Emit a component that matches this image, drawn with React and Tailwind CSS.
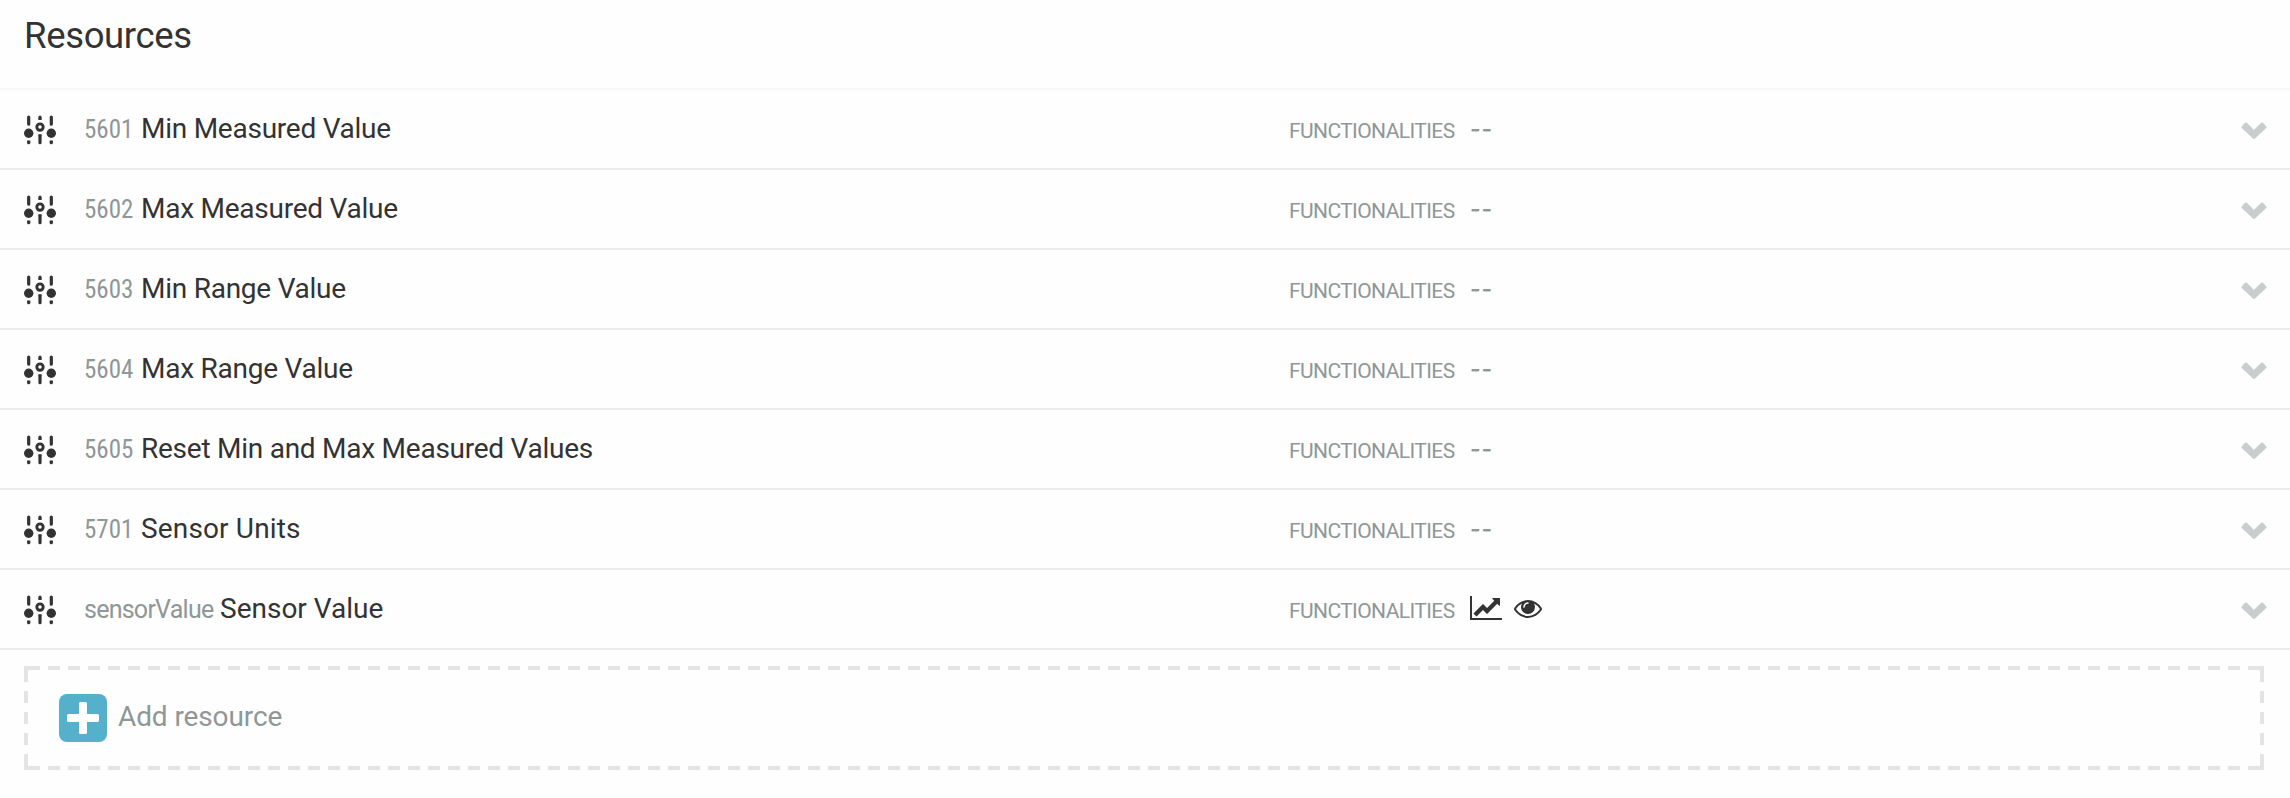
import React from 'react';

const RESOURCES = [
  { id: '5601', name: 'Min Measured Value' },
  { id: '5602', name: 'Max Measured Value' },
  { id: '5603', name: 'Min Range Value' },
  { id: '5604', name: 'Max Range Value' },
  { id: '5605', name: 'Reset Min and Max Measured Values' },
  { id: '5701', name: 'Sensor Units', nameTracking: 'tracking-[0.15px]' },
  {
    id: 'sensorValue',
    name: 'Sensor Value',
    idClass: 'w-[136px] font-[Roboto,sans-serif] tracking-[-0.75px]',
    nameTracking: 'tracking-normal',
    active: true,
  },
];

function SlidersIcon() {
  return (
    <svg className="mt-px h-[30px] w-8 shrink-0" viewBox="0 0 32 30" fill="none" stroke="#333333">
      <g strokeWidth="3.2" strokeLinecap="round">
        <path d="M4.7 2.1V9.2M4.7 27.3V27.7M16 2.1V3M16 21.2V27.7M27.3 2.1V9.2M27.3 27.3V27.7" />
      </g>
      <path d="M3.1 25.5h3.2v2H3.1zM25.7 25.5h3.2v2h-3.2zM14.4 19.3h3.2v2h-3.2zM14.4 3h3.2v2h-3.2z" fill="#333333" stroke="none" />
      <circle cx="4.7" cy="18.2" r="4.7" fill="#333333" stroke="none" />
      <circle cx="27.3" cy="18.2" r="4.7" fill="#333333" stroke="none" />
      <circle cx="16" cy="12.1" r="3.2" strokeWidth="2.9" />
    </svg>
  );
}

function ChevronIcon() {
  return (
    <svg className="h-[18px] w-[26px] shrink-0" viewBox="0 0 26 18" fill="#c9cdcd">
      <path d="M.7 4.4 4.1.8Q5 0 5.9.8L13 8.1 20.1.8Q21 0 21.900.8L25.300 4.400Q26 5.200 25.300 6L13.700 16.800Q13 17.400 12.300 16.800L.7 6Q0 5.200.7 4.400Z" />
    </svg>
  );
}

function ChartIcon() {
  return (
    <svg className="h-6 w-8 shrink-0" viewBox="0 128 2048 1536" fill="#333333">
      <path d="M2048 1536v128h-2048v-1536h128v1408h1920zM1920 288v435q0 21-19.500 29.500t-35.500-7.500l-121-121-633 633q-10 10-23 10t-23-10l-233-233-416 416-192-192 585-585q10-10 23-10t23 10l233 233 464-464-121-121q-16-16-7.500-35.500t29.500-19.500h435q14 0 23 9t9 23z" />
    </svg>
  );
}

function EyeIcon() {
  return (
    <svg className="mt-0.5 h-[18px] w-7 shrink-0" viewBox="0 384 1792 1152" fill="#333333">
      <path d="M1664 960q-152-236-381-353 61 104 61 225 0 185-131.500 316.500t-316.500 131.500-316.500-131.500-131.500-316.500q0-121 61-225-229 117-381 353 133 205 333.500 326.500t434.500 121.500 434.500-121.500 333.500-326.500zM944 576q0-20-14-34t-34-14q-125 0-214.500 89.500t-89.500 214.500q0 20 14 34t34 14 34-14 14-34q0-86 61-147t147-61q20 0 34-14t14-34zM1792 960q0 34-20 69-140 230-376.500 368.500t-499.500 138.500-499.500-139-376.500-368q-20-35-20-69t20-69q140-229 376.500-368t499.500-139 499.500 139 376.500 368q20 35 20 69z" />
    </svg>
  );
}

function ResourceRow({ id, name, active, idClass = 'w-[57px]', nameTracking = 'tracking-[-0.25px]' }) {
  return (
    <li className="flex h-20 items-center border-b-2 border-[#ebebeb] pr-[23px] pl-6">
      <SlidersIcon />
      <div className="ml-7 flex w-[1205px] items-baseline whitespace-nowrap">
        <span className={`text-[25px] leading-9 text-[#8f9797] ${idClass}`}>{id}</span>
        <span className={`font-[Roboto,sans-serif] text-[28px] leading-9 text-[#333333] ${nameTracking}`}>{name}</span>
      </div>
      <div className="flex h-9 items-center whitespace-nowrap text-[#8f9797]">
        <span className="w-[181px] pt-[5px] font-[Roboto,sans-serif] text-[21px] leading-[31px] tracking-[-0.6px]">
          FUNCTIONALITIES
        </span>
        {active ? (
          <span className="mb-0.5 flex items-center gap-3">
            <ChartIcon />
            <EyeIcon />
          </span>
        ) : (
          <span className="pt-px font-[Inter,sans-serif] text-[23px] leading-[33px] font-semibold tracking-[0.8px]">--</span>
        )}
      </div>
      <span className="mt-[3px] ml-auto">
        <ChevronIcon />
      </span>
    </li>
  );
}

function DashedOutline() {
  return (
    <svg
      className="pointer-events-none absolute inset-0 h-[104px] w-[2240px]"
      viewBox="0 0 2240 104"
      fill="none"
      stroke="#e4e4e4"
      strokeWidth="4"
    >
      <path d="M4 2H2236M4 102H2236" strokeDasharray="12 8" />
      <path d="M2 4V100M2238 4V100" strokeDasharray="12 9" />
      <path d="M0 2H4M2236 2H2240M0 102H4M2236 102H2240" />
    </svg>
  );
}

export default function App() {
  return (
    <main className="flex h-[798px] w-[2290px] flex-col bg-[#fefefe] font-['Roboto_Condensed',Roboto,sans-serif]">
      <header className="h-[90px] border-b-2 border-[#f6f6f6] pt-[14px] pl-6">
        <h1 className="font-[Roboto,sans-serif] text-[36.5px] leading-[44px] tracking-[-0.35px] text-[#333333]">Resources</h1>
      </header>
      <ul>
        {RESOURCES.map((r) => (
          <ResourceRow key={r.id} {...r} />
        ))}
      </ul>
      <div className="relative mt-4 ml-6 flex h-[104px] w-[2240px] items-center pl-[35px]">
        <DashedOutline />
        <button className="flex items-center gap-[11px] font-[Roboto,sans-serif] text-[28px] leading-9 tracking-[-0.1px] text-[#8f9797]">
          <svg className="size-12" viewBox="0 0 48 48">
            <rect width="48" height="48" rx="8" fill="#55b0cb" />
            <path
              d="M9.500 16H20V9.500Q20 8 21.500 8h5Q28 8 28 9.500V20H38.500Q40 20 40 21.500v5Q40 28 38.500 28H28V38.500Q28 40 26.500 40h-5Q20 40 20 38.500V28H9.500Q8 28 8 26.500v-5Q8 20 9.500 20H20V16Z"
              fill="#ffffff"
            />
          </svg>
          <span className="pb-[3px]">Add resource</span>
        </button>
      </div>
    </main>
  );
}
